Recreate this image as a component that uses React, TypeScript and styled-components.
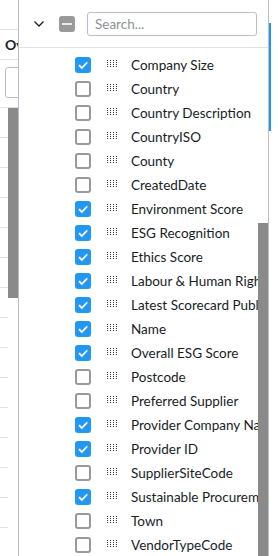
import styled, { createGlobalStyle } from 'styled-components';

const GlobalStyle = createGlobalStyle`
	html, body {
		margin: 0;
		padding: 0;
		background: #fff;
	}
	body {
		font-family: Lato, 'Open Sans', 'Liberation Sans', sans-serif;
		color: #181d1f;
	}
	* {
		box-sizing: border-box;
	}
`;

const columns: { label: string; checked: boolean }[] = [
	{ label: 'Company Size', checked: true },
	{ label: 'Country', checked: false },
	{ label: 'Country Description', checked: false },
	{ label: 'CountryISO', checked: false },
	{ label: 'County', checked: false },
	{ label: 'CreatedDate', checked: false },
	{ label: 'Environment Score', checked: true },
	{ label: 'ESG Recognition', checked: true },
	{ label: 'Ethics Score', checked: true },
	{ label: 'Labour & Human Rights Score', checked: true },
	{ label: 'Latest Scorecard Published', checked: true },
	{ label: 'Name', checked: true },
	{ label: 'Overall ESG Score', checked: true },
	{ label: 'Postcode', checked: false },
	{ label: 'Preferred Supplier', checked: false },
	{ label: 'Provider Company Name', checked: true },
	{ label: 'Provider ID', checked: true },
	{ label: 'SupplierSiteCode', checked: false },
	{ label: 'Sustainable Procurement Score', checked: true },
	{ label: 'Town', checked: false },
	{ label: 'VendorTypeCode', checked: false },
];

const Layout = styled.div`
	display: flex;
	width: 278px;
	height: 556px;
	overflow: hidden;
`;

/* grid behind the tool panel */
const GridEdge = styled.div`
	width: 18px;
	flex: none;
	display: flex;
	flex-direction: column;
	overflow: hidden;
`;

const TopStrip = styled.div`
	height: 30px;
	flex: none;
	border-bottom: 1px solid #dde2eb;
`;

const HeaderCell = styled.div`
	height: 30px;
	flex: none;
	display: flex;
	align-items: center;
	padding-left: 5px;
	font-weight: 700;
	font-size: 14px;
	white-space: nowrap;
	border-bottom: 1px solid #dde2eb;
`;

const FilterCell = styled.div`
	height: 48px;
	flex: none;
	padding: 7px 0 0 5px;
	border-bottom: 1px solid #dde2eb;
`;

const FilterBox = styled.div`
	width: 30px;
	height: 31px;
	border: 1px solid #babfc7;
	border-radius: 3px;
`;

const GridBody = styled.div`
	flex: 1;
	display: flex;
`;

const GridRows = styled.div`
	width: 8px;
	display: flex;
	flex-direction: column;
`;

const GridRow = styled.div`
	height: 30px;
	flex: none;
	border-bottom: 1px solid #dde2eb;
`;

const ScrollTrack = styled.div<{ $offset: number }>`
	width: 10px;
	flex: none;
	display: flex;
	flex-direction: column;
	padding-top: ${({ $offset }) => $offset}px;
`;

const ScrollThumb = styled.div<{ $height?: number }>`
	background: #8a8a8a;
	${({ $height }) => ($height ? `height: ${$height}px;` : 'flex: 1;')}
`;

/* columns tool panel */
const Panel = styled.div`
	width: 249px;
	flex: none;
	display: flex;
	flex-direction: column;
	border-left: 1px solid #babfc7;
	border-right: 1px solid #babfc7;
	box-sizing: content-box;
`;

const PanelHeader = styled.div`
	height: 48px;
	flex: none;
	display: flex;
	align-items: center;
	gap: 12px;
	padding: 0 11px 0 12px;
	border-bottom: 1px solid #dde2eb;
`;

const ChevronIcon = () => (
	<svg width="16" height="16" viewBox="0 0 16 16">
		<polyline points="3.5,5.5 8,10 12.5,5.5" fill="none" stroke="#181d1f" strokeWidth="1.3" />
	</svg>
);

const Box = styled.span<{ $state: 'on' | 'off' | 'mixed' }>`
	width: 16px;
	height: 16px;
	flex: none;
	display: flex;
	align-items: center;
	justify-content: center;
	border-radius: 3px;
	background: ${({ $state }) => ($state === 'on' ? '#2196f3' : $state === 'mixed' ? '#999' : '#fff')};
	border: ${({ $state }) => ($state === 'off' ? '2px solid #999' : 'none')};
`;

const Check = () => (
	<svg width="12" height="12" viewBox="0 0 12 12">
		<polyline points="2,6.2 4.8,9 10.2,3.4" fill="none" stroke="#fff" strokeWidth="1.8" />
	</svg>
);

const Dash = styled.span`
	width: 10px;
	height: 2px;
	background: #e8e8e8;
`;

const SearchInput = styled.input`
	flex: 1;
	min-width: 0;
	height: 24px;
	padding: 0 7px;
	border: 1px solid #babfc7;
	border-radius: 3px;
	font-family: inherit;
	font-size: 13.5px;
	color: #181d1f;
	outline: none;
	&::placeholder {
		color: #8d9195;
	}
`;

const PanelBody = styled.div`
	flex: 1;
	display: flex;
	min-height: 0;
`;

const List = styled.div`
	flex: 1;
	min-width: 0;
	overflow: hidden;
	padding-top: 5px;
`;

const Row = styled.div`
	height: 24px;
	display: flex;
	align-items: center;
	gap: 12px;
	padding-left: 56px;
	white-space: nowrap;
`;

const Label = styled.span`
	font-size: 13.5px;
	color: #181d1f;
`;

const Grip = () => (
	<svg width="16" height="16" viewBox="0 0 16 16" style={{ flex: 'none' }}>
		{[4, 7, 10, 13].map((x) =>
			[3, 5, 7, 9].map((y) => (
				<rect key={`${x}-${y}`} x={x} y={y} width="1" height="1" fill="#3b1f4e" />
			))
		)}
	</svg>
);

const SideBar = styled.div`
	width: 9px;
	flex: none;
	padding-top: 23px;
`;

const SideTab = styled.div`
	height: 108px;
	border-left: 2px solid #2196f3;
`;

export default function App() {
	return (
		<Layout>
			<GlobalStyle />
			<GridEdge>
				<TopStrip />
				<HeaderCell>Overall</HeaderCell>
				<FilterCell>
					<FilterBox />
				</FilterCell>
				<GridBody>
					<GridRows>
						{Array.from({ length: 15 }).map((_, i) => (
							<GridRow key={i} />
						))}
					</GridRows>
					<ScrollTrack $offset={0}>
						<ScrollThumb $height={190} />
					</ScrollTrack>
				</GridBody>
			</GridEdge>
			<Panel>
				<PanelHeader>
					<ChevronIcon />
					<Box $state="mixed">
						<Dash />
					</Box>
					<SearchInput placeholder="Search..." />
				</PanelHeader>
				<PanelBody>
					<List>
						{columns.map((c) => (
							<Row key={c.label}>
								<Box $state={c.checked ? 'on' : 'off'}>{c.checked && <Check />}</Box>
								<Grip />
								<Label>{c.label}</Label>
							</Row>
						))}
					</List>
					<ScrollTrack $offset={175}>
						<ScrollThumb />
					</ScrollTrack>
				</PanelBody>
			</Panel>
			<SideBar>
				<SideTab />
			</SideBar>
		</Layout>
	);
}
